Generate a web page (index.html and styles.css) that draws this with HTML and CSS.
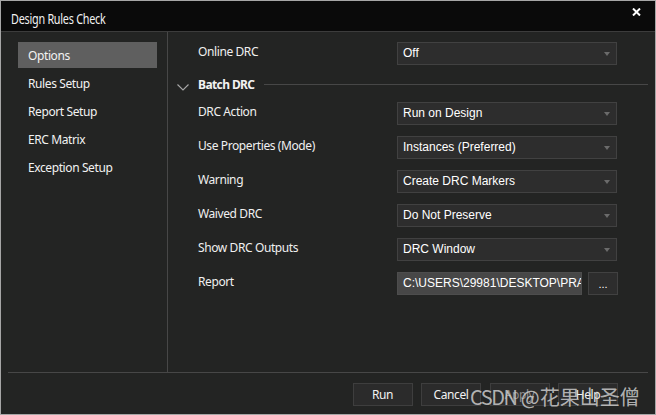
FILE: index.html
```html
<!DOCTYPE html>
<html>
<head>
<meta charset="utf-8">
<link rel="stylesheet" href="styles.css">
</head>
<body>
<div class="window">
  <div class="titlebar">
    <span class="title">Design Rules Check</span>
    <svg class="close" width="9" height="8" viewBox="0 0 9 8"><path d="M1 0.5 L8 7.5 M8 0.5 L1 7.5" stroke="#ffffff" stroke-width="2" fill="none"/></svg>
  </div>
  <div class="body">
    <div class="content">
      <nav class="nav">
        <div class="nav-item active">Options</div>
        <div class="nav-item">Rules Setup</div>
        <div class="nav-item">Report Setup</div>
        <div class="nav-item">ERC Matrix</div>
        <div class="nav-item">Exception Setup</div>
      </nav>
      <div class="panel">
        <div class="row">
          <span class="label">Online DRC</span>
          <div class="select">Off<i class="arrow"></i></div>
        </div>
        <div class="section">
          <svg class="chevron" width="12" height="7" viewBox="0 0 12 7"><path d="M0.5 0.5 L6 6 L11.5 0.5" stroke="#a8a8a8" stroke-width="1.1" fill="none"/></svg>
          <span class="section-title">Batch DRC</span>
          <div class="rule"></div>
        </div>
        <div class="row">
          <span class="label">DRC Action</span>
          <div class="select">Run on Design<i class="arrow"></i></div>
        </div>
        <div class="row">
          <span class="label">Use Properties (Mode)</span>
          <div class="select">Instances (Preferred)<i class="arrow"></i></div>
        </div>
        <div class="row">
          <span class="label">Warning</span>
          <div class="select">Create DRC Markers<i class="arrow"></i></div>
        </div>
        <div class="row">
          <span class="label">Waived DRC</span>
          <div class="select">Do Not Preserve<i class="arrow"></i></div>
        </div>
        <div class="row">
          <span class="label">Show DRC Outputs</span>
          <div class="select">DRC Window<i class="arrow"></i></div>
        </div>
        <div class="row">
          <span class="label">Report</span>
          <div class="file">
            <div class="path">C:\USERS\29981\DESKTOP\PRACTICE\DRC.RPT</div>
            <div class="browse">...</div>
          </div>
        </div>
      </div>
    </div>
    <div class="footer">
      <div class="btn">Run</div>
      <div class="btn">Cancel</div>
      <div class="btn disabled">Apply</div>
      <div class="btn">Help</div>
    </div>
  </div>
  <div class="watermark"><span class="wm-latin">CSDN</span> @花果山圣僧</div>
</div>
</body>
</html>
```
FILE: styles.css
```css
html, body {
  margin: 0;
  padding: 0;
  background: #232423;
}

.window {
  position: relative;
  width: 656px;
  height: 415px;
  box-sizing: border-box;
  border: 1px solid #a6a6a6;
  background: #232423;
  display: flex;
  flex-direction: column;
  font-family: "Noto Sans", "Open Sans", sans-serif;
  font-size: 12px;
  letter-spacing: -0.4px;
  color: #f0f0f0;
  overflow: hidden;
}

.titlebar {
  height: 30px;
  flex: none;
  background: #0a0a0a;
  border-bottom: 1px solid #3c3c3c;
  display: flex;
  align-items: center;
  justify-content: space-between;
  padding: 0 14px 0 10px;
}

.title {
  display: inline-block;
  font-size: 13.5px;
  letter-spacing: -0.3px;
  color: #f2f2f2;
  margin-top: 5px;
  transform: scaleX(0.8);
  transform-origin: left center;
}

.close {
  display: block;
  margin-top: -9px;
}

.body {
  flex: 1;
  display: flex;
  flex-direction: column;
  padding: 0 7px 7px 7px;
}

.content {
  height: 340px;
  flex: none;
  display: flex;
  border-bottom: 1px solid #474747;
}

.nav {
  width: 160px;
  flex: none;
  box-sizing: border-box;
  border-right: 1px solid #474747;
  padding: 10px 10px 0 10px;
  display: flex;
  flex-direction: column;
  gap: 2px;
}

.nav-item {
  height: 26px;
  line-height: 27px;
  padding-left: 10px;
  color: #f2f2f2;
}

.nav-item.active {
  background: #5f5f5f;
}

.panel {
  flex: 1;
  padding: 10px 0 0 30px;
  display: flex;
  flex-direction: column;
  gap: 11px;
}

.row {
  display: flex;
  align-items: flex-start;
  height: 23px;
}

.label {
  width: 199px;
  flex: none;
  line-height: 19px;
  color: #f0f0f0;
}

.select {
  position: relative;
  width: 220px;
  height: 23px;
  box-sizing: border-box;
  background: #2d2d2d;
  border: 1px solid #414141;
  padding-left: 5px;
  line-height: 21px;
  font-family: "Liberation Sans", Arial, sans-serif;
  font-size: 12px;
  letter-spacing: 0;
  color: #ffffff;
}

.arrow {
  position: absolute;
  right: 6px;
  top: 9px;
  width: 0;
  height: 0;
  border-left: 3.5px solid transparent;
  border-right: 3.5px solid transparent;
  border-top: 4px solid #6b6b6b;
}

.section {
  height: 15px;
  display: flex;
  align-items: center;
  margin-left: -21px;
  margin-top: 1px;
  margin-bottom: -1px;
}

.chevron {
  display: block;
  flex: none;
  margin-right: 9px;
  margin-top: 5px;
}

.section-title {
  font-weight: 700;
  letter-spacing: -0.6px;
  color: #f2f2f2;
}

.rule {
  flex: 1;
  height: 1px;
  background: #474747;
  margin-left: 10px;
}

.file {
  display: flex;
  gap: 6px;
}

.path {
  width: 185px;
  height: 23px;
  box-sizing: border-box;
  background: #474747;
  border: 1px solid #4d4d4d;
  padding-left: 5px;
  line-height: 21px;
  font-family: "Liberation Sans", Arial, sans-serif;
  font-size: 12px;
  letter-spacing: 0;
  color: #ffffff;
  white-space: nowrap;
  overflow: hidden;
}

.browse {
  width: 30px;
  height: 23px;
  box-sizing: border-box;
  background: #2d2d2d;
  border: 1px solid #414141;
  text-align: center;
  line-height: 23px;
  font-family: "Liberation Sans", Arial, sans-serif;
  font-size: 11px;
  letter-spacing: 0;
  color: #ffffff;
}

.footer {
  flex: 1;
  display: flex;
  justify-content: flex-end;
  align-items: flex-start;
  padding: 10px 30px 0 0;
  gap: 8.5px;
}

.btn {
  width: 60px;
  height: 23px;
  box-sizing: border-box;
  background: #2b2b2b;
  border: 1px solid #3e3e3e;
  text-align: center;
  line-height: 22px;
  color: #f2f2f2;
}

.btn.disabled {
  color: #8c8c8c;
}

.watermark {
  position: absolute;
  left: 469px;
  top: 383px;
  font-family: "Noto Sans CJK SC", "Noto Sans", sans-serif;
  font-size: 20px;
  letter-spacing: 0;
  line-height: 26px;
  color: rgba(215, 215, 215, 0.8);
  white-space: nowrap;
}

.wm-latin {
  letter-spacing: -1.5px;
}
```
